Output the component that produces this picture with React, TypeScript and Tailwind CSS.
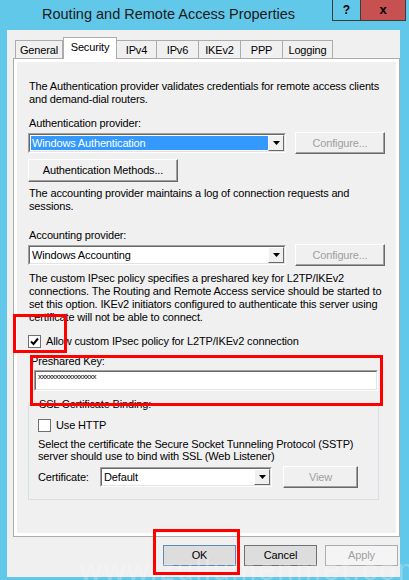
import React from "react";

const font = "font-['Liberation_Sans',Arial,sans-serif]";

const Raised = ({ label, w, h = 22, disabled = false }: { label: string; w: number; h?: number; disabled?: boolean }) => (
  <div
    className={`flex items-center justify-center bg-[#f0f0f0] border border-t-white border-l-white border-r-[#696969] border-b-[#696969] shadow-[inset_-1px_-1px_0_#a0a0a0] text-[11px] tracking-[-0.15px] ${
      disabled ? "text-[#a0a0a0]" : "text-black"
    }`}
    style={{ width: w, height: h }}
  >
    {label}
  </div>
);

const Combo = ({ value, w, selected = false }: { value: string; w: number; selected?: boolean }) => (
  <div
    className="flex h-[20px] border border-t-[#a0a0a0] border-l-[#a0a0a0] border-r-white border-b-white"
    style={{ width: w }}
  >
    <div className="flex flex-1 bg-white border border-t-[#696969] border-l-[#696969] border-r-[#e3e3e3] border-b-[#e3e3e3] p-[1px]">
      <div
        className={`flex-1 flex items-center pl-[1px] text-[11px] tracking-[-0.15px] leading-none ${
          selected ? "bg-[#3399ff] text-white" : "text-black"
        }`}
      >
        {value}
      </div>
      <div className="w-[16px] flex items-center justify-center bg-[#f0f0f0] border border-t-white border-l-white border-r-[#696969] border-b-[#696969] -my-[1px] -mr-[1px]">
        <svg width="7" height="4" viewBox="0 0 7 4">
          <path d="M0 0h7L3.5 4z" fill="#000" />
        </svg>
      </div>
    </div>
  </div>
);

const Check = ({ checked }: { checked: boolean }) => (
  <div className="w-[13px] h-[13px] bg-white border border-[#707070] flex items-center justify-center shrink-0">
    {checked && (
      <svg width="9" height="9" viewBox="0 0 9 9">
        <path d="M1 4.5l2.5 2.5L8 1.5" stroke="#000" strokeWidth="2" fill="none" />
      </svg>
    )}
  </div>
);

const Flat = ({ label, border, disabled = false }: { label: string; border: string; disabled?: boolean }) => (
  <div
    className={`w-[73px] h-[21px] flex items-center justify-center border text-[11px] tracking-[-0.15px] ${border} ${
      disabled ? "bg-[#f4f4f4] text-[#a0a0a0]" : "bg-[#dddddd] text-black"
    }`}
  >
    {label}
  </div>
);

export default function App() {
  const tabs = ["General", "Security", "IPv4", "IPv6", "IKEv2", "PPP", "Logging"];
  const widths = [47, 54, 40, 42, 42, 42, 50];

  return (
    <div className={`relative w-[409px] h-[580px] overflow-hidden bg-[#62c8ea] ${font}`}>
      {/* title bar */}
      <div className="flex h-[30px]">
        <div className="pl-[42px] pt-[4px] text-[14.5px] text-[#1a1a1a]">
          Routing and Remote Access Properties
        </div>
        <div className="ml-auto mr-[3px] flex h-[21px]">
          <div className="w-[29px] flex items-center justify-center border border-t-0 border-[#3c3c3c] text-[12px] font-bold text-black">
            ?
          </div>
          <div className="w-[45px] flex items-center justify-center bg-[#c75050] border border-t-0 border-l-0 border-[#3c3c3c] text-[13px] font-bold text-black">
            x
          </div>
        </div>
      </div>

      {/* client area */}
      <div className="ml-[7px] w-[393px] h-[547px] bg-[#f0f0f0] text-[11px] tracking-[-0.15px] text-black leading-[13px]">
        {/* tabs */}
        <div className="flex items-end h-[28px] pl-[8px]">
          {tabs.map((t, i) =>
            t === "Security" ? (
              <div
                key={t}
                className="relative z-10 h-[22px] -mb-[1px] bg-white border border-b-0 border-[#acacac] flex items-start justify-center pt-[3px] text-[11px]"
                style={{ width: widths[i] }}
              >
                {t}
              </div>
            ) : (
              <div
                key={t}
                className="h-[18px] bg-[#f0f0f0] border border-b-0 border-[#acacac] -ml-[1px] first:ml-0 flex items-center justify-center text-[11px] pt-[2px]"
                style={{ width: widths[i] + 1 }}
              >
                {t}
              </div>
            )
          )}
        </div>

        {/* tab page */}
        <div className="ml-[6px] w-[387px] h-[479px] border border-[#acacac] bg-white p-[3px]">
          <div className="h-full bg-[#f0f0f0] pl-[11px] flex flex-col">
            <p className="mt-[18px] pl-[1px]">
              The Authentication provider validates credentials for remote access clients
              <br />
              and demand-dial routers.
            </p>
            <p className="mt-[11px] pl-[1px]">Authentication provider:</p>
            <div className="mt-[2px] flex items-center gap-[9px]">
              <Combo value="Windows Authentication" w={258} selected />
              <Raised label="Configure..." w={90} disabled />
            </div>
            <div className="mt-[5px]">
              <Raised label="Authentication Methods..." w={150} h={23} />
            </div>
            <p className="mt-[5px] pl-[1px]">
              The accounting provider maintains a log of connection requests and
              <br />
              sessions.
            </p>
            <p className="mt-[16px] pl-[1px]">Accounting provider:</p>
            <div className="mt-[2px] flex items-center gap-[9px]">
              <Combo value="Windows Accounting" w={258} />
              <Raised label="Configure..." w={90} disabled />
            </div>
            <p className="mt-[6px] pl-[1px]">
              The custom IPsec policy specifies a preshared key for L2TP/IKEv2
              <br />
              connections. The Routing and Remote Access service should be started to
              <br />
              set this option. IKEv2 initiators configured to authenticate this server using
              <br />
              certificate will not be able to connect.
            </p>
            <div className="mt-[11px] flex items-center gap-[5px]">
              <Check checked />
              <span>Allow custom IPsec policy for L2TP/IKEv2 connection</span>
            </div>
            <p className="mt-[7px] pl-[3px]">Preshared Key:</p>
            <div className="mt-[2px] ml-[6px] w-[344px] h-[21px] border border-t-[#a0a0a0] border-l-[#a0a0a0] border-r-white border-b-white">
              <div className="h-full bg-white border border-t-[#696969] border-l-[#696969] border-r-[#e3e3e3] border-b-[#e3e3e3] pl-[2px] text-[8px] leading-[9px] tracking-[-0.6px]">
                xxxxxxxxxxxxxxxxx
              </div>
            </div>

            {/* SSL group */}
            <div className="relative mt-[13px] w-[351px] h-[96px] border border-[#d5dfe5] border-t-[#dcdcdc]">
              <span className="absolute -top-[7px] left-[8px] bg-[#f0f0f0] px-[2px]">SSL Certificate Binding:</span>
              <div className="pl-[9px] pt-[14px] flex flex-col">
                <div className="flex items-center gap-[5px]">
                  <Check checked={false} />
                  <span>Use HTTP</span>
                </div>
                <p className="mt-[6px] leading-[12px]">
                  Select the certificate the Secure Socket Tunneling Protocol (SSTP)
                  <br />
                  server should use to bind with SSL (Web Listener)
                </p>
                <div className="mt-[4px] flex items-center">
                  <span className="w-[62px]">Certificate:</span>
                  <Combo value="Default" w={172} />
                  <div className="ml-[11px]">
                    <Raised label="View" w={75} disabled />
                  </div>
                </div>
              </div>
            </div>
          </div>
        </div>

        {/* dialog buttons */}
        <div className="mt-[8px] flex gap-[8px] pl-[156px]">
          <Flat label="OK" border="border-[#5b8bb6]" />
          <Flat label="Cancel" border="border-[#707070]" />
          <Flat label="Apply" border="border-[#adadad]" disabled />
        </div>
      </div>

      {/* watermark */}
      <div className="absolute left-[80px] top-[552px] text-[30px] leading-[36px] text-white/25 tracking-[2px] pointer-events-none">
        www.zullumenmet.com
      </div>

      {/* annotation boxes */}
      <div className="absolute left-[13px] top-[314px] w-[54px] h-[39px] border-[3px] border-[#ff0000]" />
      <div className="absolute left-[30px] top-[355px] w-[353px] h-[51px] border-[3px] border-[#ff0000]" />
      <div className="absolute left-[153px] top-[529px] w-[87px] h-[46px] border-[3px] border-[#ff0000]" />
    </div>
  );
}
